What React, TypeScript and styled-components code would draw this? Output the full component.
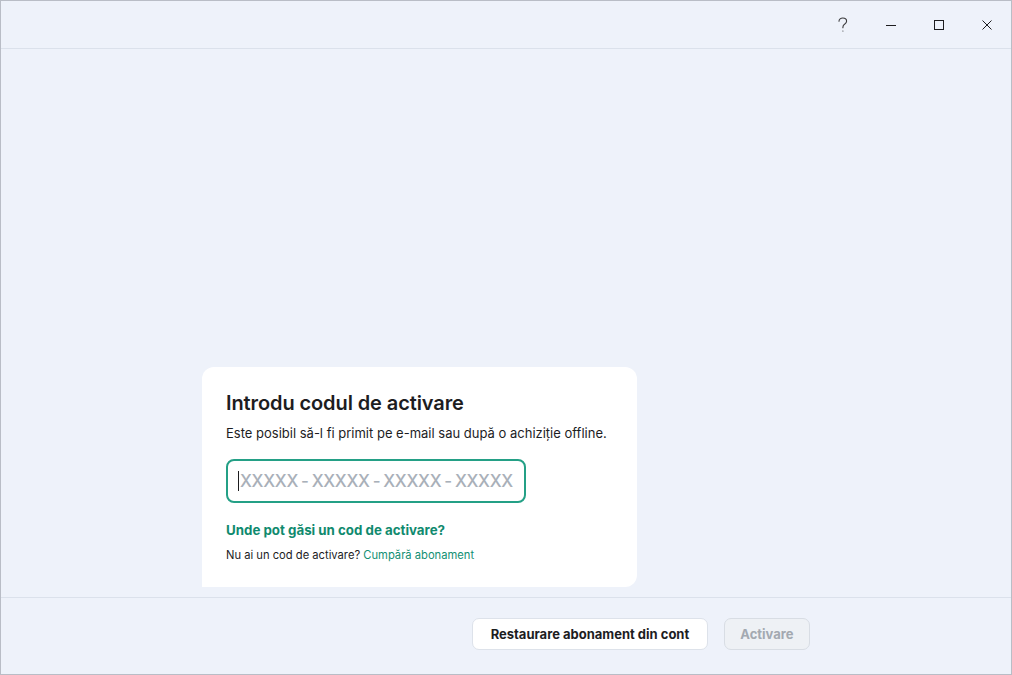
import styled, { createGlobalStyle } from "styled-components";

const GlobalStyle = createGlobalStyle`
  html, body {
    margin: 0;
    padding: 0;
    height: 100%;
  }
  body {
    font-family: Inter, "Noto Sans", "Liberation Sans", sans-serif;
    color: #1d1d1f;
    background: #eef2fa;
  }
  * {
    box-sizing: border-box;
  }
`;

const Window = styled.div`
  width: 1012px;
  height: 675px;
  display: flex;
  flex-direction: column;
  background: #eef2fa;
  border: 1px solid #b9bdc6;
`;

const TitleBar = styled.div`
  height: 48px;
  flex-shrink: 0;
  display: flex;
  justify-content: flex-end;
  border-bottom: 1px solid #dbe1eb;
`;

const TitleButton = styled.button`
  width: 48px;
  height: 47px;
  border: none;
  background: transparent;
  padding: 0;
  display: flex;
  align-items: center;
  justify-content: center;
  color: #1d1d1f;
  cursor: pointer;
`;

const Content = styled.div`
  flex: 1;
  display: flex;
  flex-direction: column;
  justify-content: flex-end;
  padding-bottom: 10px;
`;

const Column = styled.div`
  width: 608px;
  margin: 0 auto;
`;

const Card = styled.div`
  width: 435px;
  background: #ffffff;
  border-radius: 12px 12px 12px 0;
  padding: 23px 24px 25px;
`;

const Title = styled.h2`
  margin: 0;
  font-size: 20px;
  font-weight: 600;
  line-height: 26px;
  letter-spacing: -0.1px;
`;

const Subtitle = styled.p`
  margin: 8px 0 0;
  font-size: 13px;
  line-height: 18px;
`;

const CodeField = styled.div`
  margin-top: 17px;
  width: 300px;
  height: 44px;
  border: 2px solid #24a086;
  border-radius: 8px;
  display: flex;
  align-items: center;
  padding-left: 10px;
`;

const Caret = styled.span`
  width: 1px;
  height: 20px;
  background: #1d1d1f;
  flex-shrink: 0;
`;

const Placeholder = styled.span`
  font-size: 17px;
  font-weight: 500;
  color: #a9b0b9;
  letter-spacing: -0.3px;
  white-space: nowrap;
  margin-left: 1px;
`;

const Dash = styled.span`
  margin: 0 3px;
`;

const HelpLink = styled.a`
  display: block;
  margin-top: 18px;
  font-size: 13.3px;
  font-weight: 700;
  line-height: 18px;
  color: #0f8a6e;
  text-decoration: none;
`;

const Note = styled.p`
  margin: 9px 0 0;
  font-size: 11.2px;
  line-height: 14px;
  color: #1d1d1f;
`;

const NoteLink = styled.a`
  color: #138f73;
  text-decoration: none;
`;

const Footer = styled.div`
  flex-shrink: 0;
  height: 77px;
  border-top: 1px solid #dbe1eb;
  padding-top: 20px;
`;

const Actions = styled.div`
  display: flex;
  justify-content: flex-end;
  gap: 16px;
`;

const Button = styled.button<{ disabled?: boolean }>`
  height: 32px;
  padding: 0 ${p => (p.disabled ? "15.5px" : "17.5px")};
  border-radius: 7px;
  font-family: inherit;
  font-size: 13px;
  font-weight: 700;
  border: 1px solid ${p => (p.disabled ? "#d8dde4" : "#dde2ea")};
  background: ${p => (p.disabled ? "#eef1f5" : "#ffffff")};
  color: ${p => (p.disabled ? "#a3a9b1" : "#1d1d1f")};
  cursor: ${p => (p.disabled ? "default" : "pointer")};
`;

function HelpIcon() {
  return (
    <svg width="14" height="18" viewBox="0 0 14 18" fill="none" stroke="#3a3a3c" strokeWidth="1.1">
      <path d="M3 5.2C3 3.2 4.7 2 6.8 2c2.2 0 3.8 1.3 3.8 3.2 0 1.6-1 2.3-2.1 3.1C7.4 9 6.9 9.7 6.9 11.2v0.6" strokeLinecap="round" />
      <circle cx="6.9" cy="15" r="0.6" fill="#3a3a3c" stroke="none" />
    </svg>
  );
}

function MinimizeIcon() {
  return (
    <svg width="12" height="12" viewBox="0 0 12 12">
      <line x1="1" y1="6.5" x2="11" y2="6.5" stroke="#1d1d1f" strokeWidth="1" />
    </svg>
  );
}

function MaximizeIcon() {
  return (
    <svg width="12" height="12" viewBox="0 0 12 12">
      <rect x="1.5" y="1.5" width="9" height="9" fill="none" stroke="#1d1d1f" strokeWidth="1" />
    </svg>
  );
}

function CloseIcon() {
  return (
    <svg width="12" height="12" viewBox="0 0 12 12">
      <path d="M1.5 1.5L10.5 10.5M10.5 1.5L1.5 10.5" stroke="#1d1d1f" strokeWidth="1" />
    </svg>
  );
}

const groups = ["XXXXX", "XXXXX", "XXXXX", "XXXXX"];

export default function App() {
  return (
    <>
      <GlobalStyle />
      <Window>
        <TitleBar>
          <TitleButton aria-label="Ajutor">
            <HelpIcon />
          </TitleButton>
          <TitleButton aria-label="Minimizare">
            <MinimizeIcon />
          </TitleButton>
          <TitleButton aria-label="Maximizare">
            <MaximizeIcon />
          </TitleButton>
          <TitleButton aria-label="Închidere">
            <CloseIcon />
          </TitleButton>
        </TitleBar>

        <Content>
          <Column>
            <Card>
              <Title>Introdu codul de activare</Title>
              <Subtitle>Este posibil să-l fi primit pe e-mail sau după o achiziție offline.</Subtitle>
              <CodeField>
                <Caret />
                <Placeholder>
                  {groups.map((g, i) => (
                    <span key={i}>
                      {i > 0 && <Dash>-</Dash>}
                      {g}
                    </span>
                  ))}
                </Placeholder>
              </CodeField>
              <HelpLink href="#">Unde pot găsi un cod de activare?</HelpLink>
              <Note>
                Nu ai un cod de activare? <NoteLink href="#">Cumpără abonament</NoteLink>
              </Note>
            </Card>
          </Column>
        </Content>

        <Footer>
          <Column>
            <Actions>
              <Button>Restaurare abonament din cont</Button>
              <Button disabled>Activare</Button>
            </Actions>
          </Column>
        </Footer>
      </Window>
    </>
  );
}
